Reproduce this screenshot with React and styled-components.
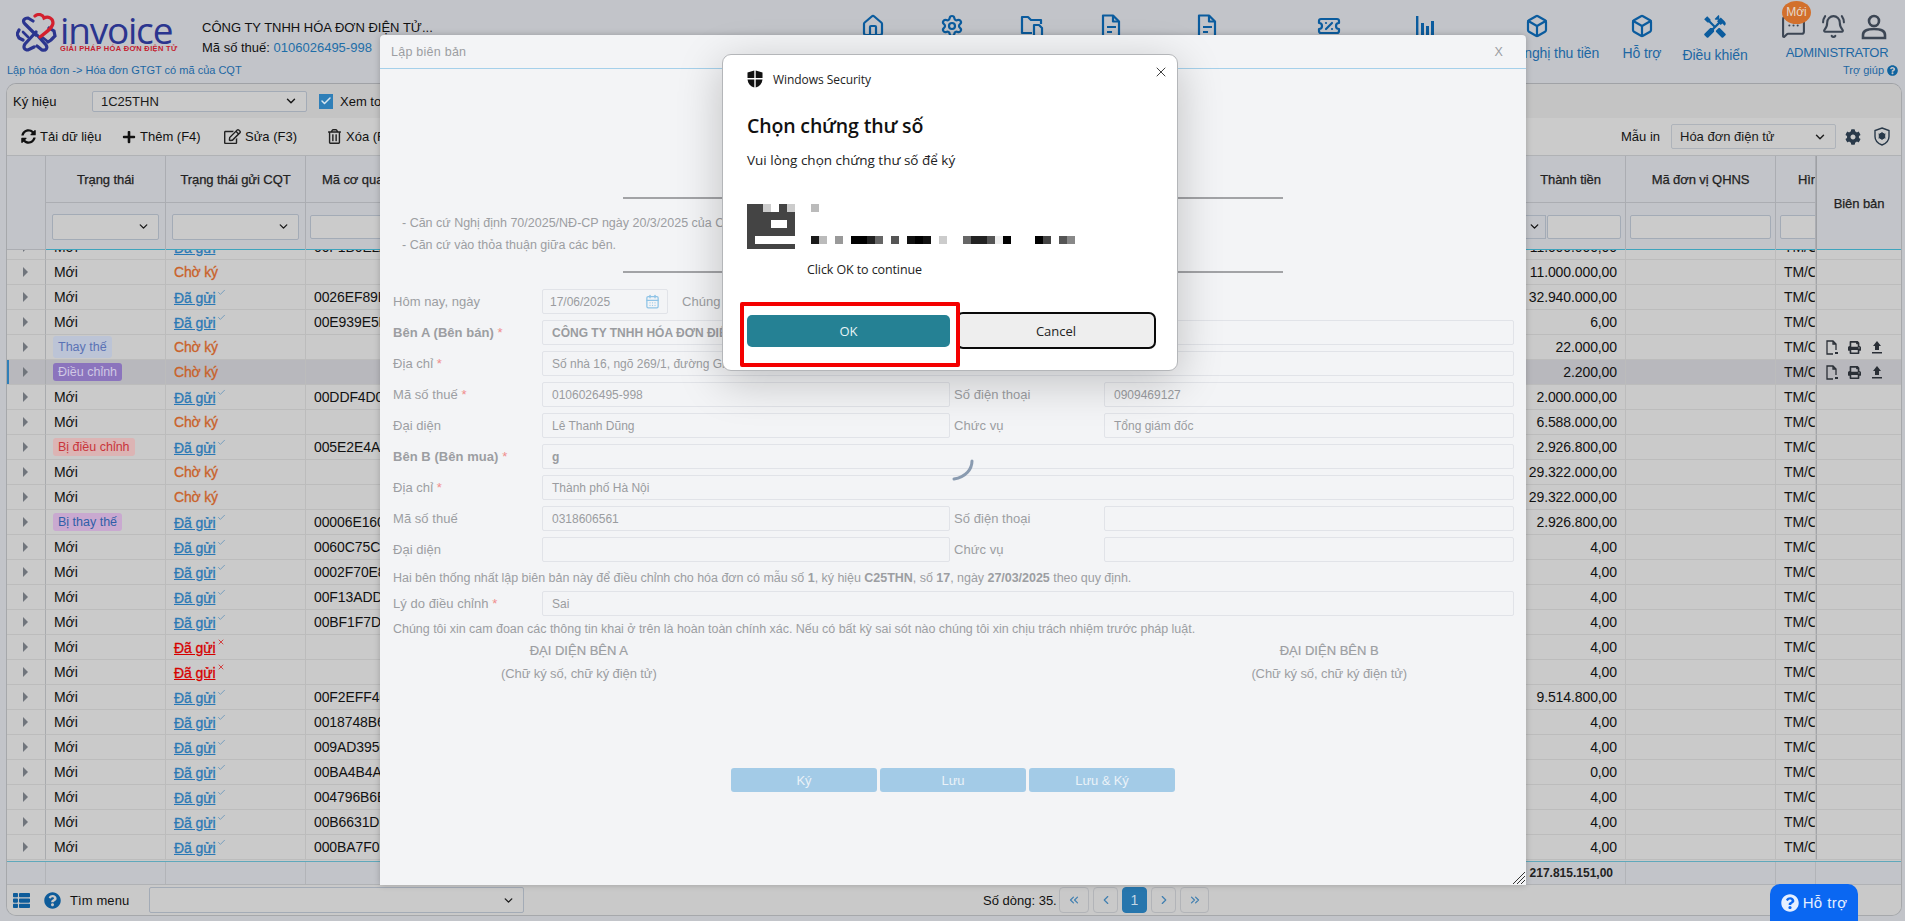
import React from "react";
import styled, { createGlobalStyle } from "styled-components";
import { House, Settings, TicketPercent, Box, MessageSquareMore, BellRing, ChevronDown, ChevronsLeft, ChevronsRight, ChevronLeft, ChevronRight, X as XIcon, Check, CalendarDays } from "lucide-react";
import { FaSyncAlt, FaPlus, FaRegEdit, FaRegTrashAlt, FaCog, FaQuestionCircle, FaThList, FaPrint } from "react-icons/fa";
import { MdHandyman } from "react-icons/md";

const Global = createGlobalStyle`
  html, body { margin: 0; width: 1905px; height: 921px; overflow: hidden; background: #c2c4c9; }
  body { font-family: "Liberation Sans", Arial, sans-serif; font-size: 13px; color: #111; }
  * { box-sizing: border-box; }
`;

const Page = styled.div`position: relative; width: 1905px; height: 921px; overflow: hidden;`;

/* header */
const TopBar = styled.header`display: flex; height: 62px; align-items: flex-start;`;
const Logo = styled.div`display: flex; align-items: flex-start; width: 202px; padding: 13px 0 0 16px;`;
const LogoText = styled.div`display: flex; flex-direction: column; margin: 2px 0 0 3px;`;
const LogoWord = styled.span`font: 400 37px/29px "Open Sans", sans-serif; letter-spacing: -1.2px; color: #2b358f; height: 29px;`;
const LogoTag = styled.span`font: 700 7.5px/10px "Liberation Sans", sans-serif; letter-spacing: .35px; color: #c5202e; white-space: nowrap;`;
const Company = styled.div`width: 631px; padding-top: 18px; line-height: 20px; font-size: 13px;`;
const CompanyName = styled.div`font-size: 13px;`;
const TaxCode = styled.span`color: #1e6ea8;`;
const Nav = styled.nav`display: flex; align-items: flex-start; padding-top: 14px;`;
const NavItem = styled.div`
  width: ${p => p.$w}px; display: flex; flex-direction: column; align-items: center; gap: 7px;
  color: #1d67a3; font-size: 14px; white-space: nowrap; letter-spacing: -.1px;
  svg { color: #0b5c9e; display: block; }
`;
const NavLabel = styled.span`margin-left: ${p => p.$shift || 0}px;`;
const UserArea = styled.div`position: relative; width: 144px; padding-top: 14px; display: flex; flex-direction: column; align-items: center;`;
const UserIcons = styled.div`display: flex; gap: 15px; height: 31px; color: #3c4654; padding-left: 2px;`;
const UserName = styled.div`color: #1d67a3; font-size: 13px; letter-spacing: -.3px; margin-left: 8px;`;
const NewBadge = styled.span`position: absolute; left: 21px; top: 1px; width: 29px; height: 23px; border-radius: 50%; background: #d2702c; color: #e6d9ca; font-size: 12px; line-height: 22px; text-align: center;`;
const Crumbs = styled.div`display: flex; justify-content: space-between; height: 21px; padding: 0 7px; font-size: 11px; line-height: 17px; color: #1d67a3;`;
const Help = styled.span`display: flex; align-items: center; gap: 3px; height: 17px;`;

/* panel */
const Panel = styled.main`
  margin-left: 6px; width: 1896px; height: 833px; background: #c9c9c9; border: 1px solid #a6a8ab; border-top: 1px solid #a0a2a6;
  border-radius: 10px; overflow: hidden; display: flex; flex-direction: column;
`;
const FilterBar = styled.div`display: flex; align-items: center; height: 34px; background: #c4c4c4; padding-left: 6px;`;
const BarLabel = styled.span`width: 79px; font-size: 13px;`;
const SelectBox = styled.div`
  display: flex; align-items: center; justify-content: space-between; flex: none;
  width: ${p => p.$w}px; height: ${p => p.$h || 25}px; padding: 0 8px; font-size: 13px; color: #1a1a1a;
  border: 1px solid ${p => p.$soft ? "#aeb3ba" : "#a3abb6"}; border-radius: 2px; background: #cacaca;
`;
const CheckBox = styled.span`display: flex; align-items: center; justify-content: center; width: 14px; height: 15px; margin: 0 7px 0 12px; background: #2f7fb8; color: #d8e6f0;`;
const ToolRow = styled.div`display: flex; align-items: center; height: 38px; padding: 0 11px 0 14px; background: #cbcbcb; border-bottom: 1px solid #b0b2b5; font-size: 13px;`;
const Tool = styled.span`display: flex; align-items: center; gap: 4px; white-space: nowrap; width: ${p => p.$w}px;`;
const ToolEnd = styled.div`display: flex; align-items: center; margin-left: auto; color: #2a3a4a;`;
const PrintLabel = styled.span`width: 50px; color: #111; font-size: 13px;`;
const IconSlot = styled.span`display: flex; margin-left: ${p => p.$m || 0}px;`;

const cols = "39px 120px 140px 1210px 110px 150px 40px 1fr";
const THead = styled.div`
  display: grid; grid-template-columns: ${cols}; grid-template-rows: 47px 47px; height: 94px;
  background: #c2c4c9; border-bottom: 1px solid #3ea4bd; flex: none;
`;
const HCell = styled.div`
  display: flex; align-items: center; justify-content: ${p => p.$inset ? "flex-start" : "center"}; font-size: 13px; color: #222; overflow: hidden; white-space: nowrap;
  border-right: 1px solid #abadb2; border-bottom: 1px solid #abadb2;
  padding: 0 4px 0 ${p => p.$inset || 4}px;
`;
const HeadText = styled.span`-webkit-text-stroke: .25px #222; letter-spacing: -.08px;`;
const SideHead = styled(HCell)`grid-row: 1 / span 2; grid-column: 8; border-bottom: 0; border-right: 0; border-left: 1px solid #9ea0a4;`;
const FirstHead = styled(HCell)`grid-row: 1 / span 2;`;
const FCell = styled.div`display: flex; align-items: center; justify-content: ${p => p.$align || "center"}; padding: 0 4px; border-right: 1px solid #abadb2; overflow: hidden;`;
const FilterInput = styled.div`width: ${p => p.$w ? `${p.$w}px` : "100%"}; flex: none; height: 24px; border: 1px solid #a3abb6; border-radius: 2px; background: #cbcbcb;`;
const MiniSelect = styled.div`display: flex; align-items: center; justify-content: flex-end; flex: none; width: 30px; height: 24px; margin-right: 1px; border: 1px solid #a3abb6; border-left: 0; padding-right: 4px;`;

const TBody = styled.div`height: 611px; overflow: hidden; flex: none;`;
const RowList = styled.div`margin-top: -15px;`;
const Row = styled.div`
  display: grid; grid-template-columns: ${cols}; height: 25px; align-items: stretch; position: relative;
  background: ${p => p.$sel ? "#b8b8bd" : "#cacaca"};
  ${p => p.$sel ? "box-shadow: inset 2px 0 0 #2f7fb8;" : ""}
`;
const Cell = styled.div`
  display: flex; align-items: center; justify-content: ${p => p.$right ? "flex-end" : "flex-start"};
  padding: ${p => p.$right ? "0 8px 0 0" : "0 0 0 8px"}; font-size: 14px; letter-spacing: -.1px; white-space: nowrap; overflow: hidden;
  border-right: 1px solid ${p => p.$strong ? "#a9abae" : "#bcbcbc"}; border-bottom: 1px solid #bcbcbc;
`;
const Expander = styled(Cell)`padding: 0; justify-content: center;`;
const Tri = styled.span`width: 0; height: 0; border-left: 5px solid #70757c; border-top: 5px solid transparent; border-bottom: 5px solid transparent; margin-left: -1px;`;
const Tag = styled.span`
  display: inline-block; padding: 0 5px; height: ${p => p.$h || 18}px; line-height: ${p => p.$h || 18}px; font-size: 12.5px; border-radius: 3px; letter-spacing: 0;
  color: ${p => p.$fg}; background: ${p => p.$bg}; margin-left: -1px;
`;
const Pending = styled.span`color: #c9622a; font-size: 14px; letter-spacing: -.2px; -webkit-text-stroke: .3px #c9622a;`;
const Sent = styled.span`display: inline-flex; align-items: flex-start; color: ${p => p.$bad ? "#d60000" : "#2a79b5"}; font-size: 14px; -webkit-text-stroke: .3px currentColor; margin-top: 1px;`;
const SentText = styled.span`text-decoration: underline; padding-right: 1px;`;
const Mark = styled.span`display: inline-flex; margin: -2px 0 0 1px; color: ${p => p.$bad ? "#d60000" : "#5a8fb8"}; -webkit-text-stroke: 0;`;
const Actions = styled.div`display: flex; align-items: center; gap: 10px; padding-left: 9px; color: #2a2f36;`;
const SideCell = styled(Cell)`padding: 0; border-right: 0; border-left: 1px solid #a3a5a8;`;

const TotalRow = styled.div`display: grid; grid-template-columns: ${cols}; height: 24px; background: #c2c4c9; border-top: 1px solid #5fa8bb; border-bottom: 1px solid #b0b2b5; flex: none;`;
const TotalCell = styled.div`display: flex; align-items: center; justify-content: flex-end; border-right: 1px solid #b2b4b8; font-size: 12px; font-weight: 700; color: #222; padding-right: 12px; white-space: nowrap;`;
const BottomBar = styled.div`display: flex; align-items: center; flex: 1; padding-left: 6px; background: #c9c9c9;`;
const BottomIcon = styled.span`display: flex; margin-right: ${p => p.$m}px;`;
const MenuLabel = styled.span`width: 79px; font-size: 13px; letter-spacing: .1px;`;
const RowsCount = styled.span`margin-left: 459px; width: 76px; font-size: 13px;`;
const Pager = styled.div`display: flex; gap: 4px; align-items: center;`;
const PageBtn = styled.span`
  display: flex; align-items: center; justify-content: center; width: ${p => p.$w}px; height: 26px; border-radius: 4px;
  border: 1px solid ${p => p.$on ? "#2776ad" : "#b2b4b8"}; background: ${p => p.$on ? "#2776ad" : "transparent"}; color: ${p => p.$on ? "#c4d7e4" : "#3f7fb0"}; font-size: 14px;
`;
const Support = styled.button`
  position: absolute; left: 1770px; top: 884px; width: 88px; height: 37px; border: 0; border-radius: 10px 10px 0 0; background: #0a67f2; color: #e6efff;
  font: 400 15px "Liberation Sans", sans-serif; display: flex; align-items: center; justify-content: center; gap: 4px; letter-spacing: .4px;
`;

/* invoice modal */
const Modal = styled.section`
  position: absolute; left: 380px; top: 35px; width: 1146px; height: 850px; background: #f3f4f6; border-radius: 4px 4px 0 0;
  box-shadow: 0 0 6px rgba(0,0,0,.22); color: #9c9ea2; display: flex; flex-direction: column;
`;
const ModalHead = styled.div`display: flex; justify-content: space-between; align-items: center; height: 34px; padding: 0 23px 0 11px; border-bottom: 1px solid #a5d0ea; font-size: 12.5px; letter-spacing: .25px; flex: none;`;
const ModalBody = styled.div`padding: 128px 12px 0 13px; display: flex; flex-direction: column; flex: 1;`;
const Rule = styled.div`height: 1px; border-top: 2px solid #a2a3a6; width: 660px; margin-left: 230px;`;
const Basis = styled.div`padding: 13px 0 15px 9px; line-height: 22px; font-size: 12.5px; height: 72px;`;
const Spacer = styled.div`height: 16px;`;
const FormRow = styled.div`display: flex; align-items: center; height: 25px; margin-bottom: ${p => p.$mb ?? 6}px;`;
const FieldLabel = styled.label`flex: none; width: ${p => p.$w || 149}px; font-size: 13px; font-weight: ${p => p.$bold ? 700 : 400}; padding-left: ${p => p.$pl ?? 0}px; letter-spacing: .05px;`;
const Star = styled.span`color: #f08d8d; font-weight: 400;`;
const Field = styled.div`
  display: flex; align-items: center; justify-content: ${p => p.$between ? "space-between" : "flex-start"}; flex: ${p => p.$w ? "none" : 1}; width: ${p => p.$w ? `${p.$w}px` : "auto"};
  height: 25px; padding: 0 ${p => p.$between ? 7 : 9}px; font-size: 12px; font-weight: ${p => p.$bold ? 700 : 400}; border: 1px solid #e1e3e8; border-radius: 2px; color: #9a9ca0;
`;
const PlainLine = styled.div`font-size: 12.5px; line-height: 20px; margin: ${p => p.$m}; letter-spacing: -.03px;`;
const Signs = styled.div`display: flex; justify-content: space-between; padding: 4px 107px 0 108px; font-size: 13px; text-align: center;`;
const SignCol = styled.div`display: flex; flex-direction: column; gap: 8px;`;
const SignTitle = styled.div`font-size: 13px; -webkit-text-stroke: .2px #9c9ea2;`;
const SignNote = styled.div`font-size: 13px; letter-spacing: -.1px;`;
const ModalButtons = styled.div`display: flex; gap: 3px; margin: 87px 0 0 338px;`;
const SoftBtn = styled.span`display: flex; align-items: center; justify-content: center; width: 146px; height: 24px; border-radius: 3px; background: #a3cbe7; color: #eaf2f8; font-size: 13px; letter-spacing: -.1px;`;
const Grip = styled.svg`position: absolute; right: 0; bottom: 0;`;
const Spinner = styled.svg`position: absolute; left: 570px; top: 424px;`;

/* windows dialog */
const Dialog = styled.section`
  position: absolute; left: 722px; top: 54px; width: 456px; height: 317px; background: #fff; border-radius: 9px; border: 1px solid #b4b6b9;
  box-shadow: 0 10px 45px rgba(0,0,0,.22); padding: 13px 20px 0 24px; color: #111; font-family: "Open Sans", "Noto Sans", sans-serif; display: flex; flex-direction: column;
`;
const DialogClose = styled.span`position: absolute; right: 8px; top: 9px; display: flex; color: #222;`;
const Brand = styled.div`display: flex; align-items: center; gap: 10px; height: 22px; font-size: 12px; color: #222; letter-spacing: -.05px;`;
const DialogTitle = styled.h2`margin: 22px 0 0; font: 600 19.5px/28px "Open Sans", sans-serif; color: #111; letter-spacing: -.15px;`;
const DialogText = styled.p`margin: 10px 0 0; font-size: 13.5px; line-height: 20px; color: #222;`;
const Cert = styled.svg`display: block; margin-top: 34px; flex: none;`;
const ClickText = styled.div`margin: 12px 0 0 60px; font-size: 12.5px; line-height: 18px; color: #222; letter-spacing: -.1px;`;
const DialogActions = styled.div`position: relative; display: flex; gap: 6px; margin-top: 33px; align-items: center;`;
const OkBtn = styled.button`width: 203px; height: 32px; flex: none; border: 0; border-radius: 5px; background: #258194; color: #e8f4f6; font: 400 13px "Open Sans", sans-serif;`;
const CancelBtn = styled.button`width: 200px; height: 37px; flex: none; border: 2px solid #0a0a0a; border-radius: 7px; background: #eeeeee; color: #222; font: 400 13px "Open Sans", sans-serif;`;
const RedBox = styled.div`position: absolute; left: 740px; top: 302px; width: 220px; height: 65px; border: 4px solid #f40000; border-radius: 2px; pointer-events: none;`;

const HomeIcon = () => <House size={24} strokeWidth={2.2} />;
const GearIcon = () => <Settings size={24} strokeWidth={2.2} />;
const FolderIcon = () => (
  <svg width="24" height="23" viewBox="0 0 24 23" fill="none" stroke="currentColor" strokeWidth="2.2" strokeLinejoin="round">
    <path d="M12 19H2V3h6l3 3h10v4" /><path d="M14 11h5l3 3v8h-8z" />
  </svg>
);
const DocIcon = () => (
  <svg width="22" height="24" viewBox="0 0 22 24" fill="none" stroke="currentColor" strokeWidth="2.2" strokeLinejoin="round">
    <path d="M3 1.5h10l6 6v15H3z" /><path d="M13 1.5v6h6M7 13h9M7 18h5" />
  </svg>
);
const ChartIcon = () => (
  <svg width="24" height="24" viewBox="0 0 24 24" fill="#0b5c9e"><path d="M2 2h2.400v19H23v2.200H2z" /><path d="M7 9h3v12H7zM12 12h3v9h-3zM17 7h3v14h-3z" /></svg>
);
const PersonIcon = () => (
  <svg width="26" height="26" viewBox="0 0 26 26" fill="none" stroke="#3c4654" strokeWidth="2.6"><circle cx="13" cy="7" r="5" /><path d="M2 24v-3c0-4 4-6 11-6s11 2 11 6v3z" /></svg>
);
const KnotLogo = () => (
  <svg width="41" height="40" viewBox="0 0 41 40" fill="none" strokeLinecap="round">
    <path d="M20 22 9 11c-3-3-1-6 3-6l5 3M21 22l9 10c2 3 0 6-4 5l-5-4M20 19 9 31c-2 3-1 6 3 6l6-3M3 17l-2 4 2 4 4 2M33 15l5 3 1 5-4 4-3 2" stroke="#2b358f" strokeWidth="3.2" />
    <path d="M7 19l5 5M26 24l5 4" stroke="#2b358f" strokeWidth="2.6" />
    <path d="M19 3c4-3 8-1 9 2 4-2 9 0 9 5 0 4-5 8-13 14" stroke="#d3202e" strokeWidth="3.2" />
  </svg>
);
const ShieldIcon = () => (
  <svg width="16" height="19" viewBox="0 0 16 19" fill="none" stroke="#2a3a4a" strokeWidth="1.4">
    <path d="M8 1l7 2.500v6c0 4-3 7-7 8.500-4-1.500-7-4.500-7-8.500v-6z" /><circle cx="8" cy="9" r="2.600" fill="#2a3a4a" />
    <path d="M8 5v8M4.500 7l7 4M11.500 7l-7 4" strokeWidth="1" />
  </svg>
);
const WinShield = () => (
  <svg width="16" height="18" viewBox="0 0 16 18" fill="#111"><path d="M7.300.5.500 2.500V8h6.800zM8.700.5l6.800 2V8H8.700zM.5 9.400h6.800v8.100C3.500 16.300 1 13.700.5 9.400zM8.700 9.400h6.800c-.5 4.300-3 6.900-6.800 8.100z" /></svg>
);
const FileMini = () => (
  <svg width="12" height="15" viewBox="0 0 12 15" fill="none" stroke="#2a2f36" strokeWidth="1.300"><path d="M7 14H1V1h6l3 3v6M7 1v3h3" /><path d="M9 12h3v2H9z" fill="#2a2f36" stroke="none" /></svg>
);
const UploadMini = () => (
  <svg width="12" height="14" viewBox="0 0 12 14" fill="#2a2f36"><path d="M6 1 10 6H8v4H4V6H2zM1 12h10v1.500H1z" /></svg>
);

const pixelRow = ["#1a1a1a","#bbb",null,"#999",null,"#000","#000","#222","#666",null,"#555",null,"#111","#000","#111",null,"#ccc",null,null,"#666","#222","#222","#555","#eee","#000",null,null,null,"#000","#444",null,"#555","#888"];
const CertArt = () => (
  <Cert width="330" height="45" viewBox="0 0 330 45" shapeRendering="crispEdges">
    <rect x="0" y="0" width="48" height="45" fill="#444" />
    <rect x="16" y="0" width="8" height="8" fill="#ccc" /><rect x="24" y="0" width="8" height="8" fill="#fff" />
    <rect x="40" y="0" width="8" height="8" fill="#ccc" />
    <rect x="24" y="16" width="16" height="8" fill="#fff" /><rect x="8" y="32" width="40" height="8" fill="#fff" />
    <rect x="64" y="0" width="8" height="8" fill="#bbb" />
    {pixelRow.map((c, i) => c ? <rect key={i} x={64 + i * 8} y="32" width="8" height="8" fill={c} /> : null)}
  </Cert>
);

const rows = [
  ["Mới", "sent", "00F1B0E2A", "11.000.000,00"],
  ["Mới", "wait", "", "11.000.000,00"],
  ["Mới", "sent", "0026EF89B0", "32.940.000,00"],
  ["Mới", "sent", "00E939E5B0", "6,00"],
  ["replace", "wait", "", "22.000,00", true],
  ["adjust", "wait", "", "2.200,00", true, true],
  ["Mới", "sent", "00DDF4D0B0", "2.000.000,00"],
  ["Mới", "wait", "", "6.588.000,00"],
  ["adjusted", "sent", "005E2E4A60", "2.926.800,00"],
  ["Mới", "wait", "", "29.322.000,00"],
  ["Mới", "wait", "", "29.322.000,00"],
  ["replaced", "sent", "00006E1601", "2.926.800,00"],
  ["Mới", "sent", "0060C75C80", "4,00"],
  ["Mới", "sent", "0002F70E80", "4,00"],
  ["Mới", "sent", "00F13ADDA0", "4,00"],
  ["Mới", "sent", "00BF1F7D40", "4,00"],
  ["Mới", "bad", "", "4,00"],
  ["Mới", "bad", "", "4,00"],
  ["Mới", "sent", "00F2EFF4C0", "9.514.800,00"],
  ["Mới", "sent", "0018748B60", "4,00"],
  ["Mới", "sent", "009AD395C0", "4,00"],
  ["Mới", "sent", "00BA4B4A70", "0,00"],
  ["Mới", "sent", "004796B6E0", "4,00"],
  ["Mới", "sent", "00B6631DE0", "4,00"],
  ["Mới", "sent", "000BA7F0F0", "4,00"],
];

const tagMap = {
  replace: <Tag $h={22} $fg="#5a72b5" $bg="#bcc4d6">Thay thế</Tag>,
  adjust: <Tag $fg="#cfc8e4" $bg="#8b74bd">Điều chỉnh</Tag>,
  adjusted: <Tag $fg="#c9353b" $bg="#dcb4b4">Bị điều chỉnh</Tag>,
  replaced: <Tag $fg="#2f5fa8" $bg="#c9a9d0">Bị thay thế</Tag>,
};

const SendState = ({ v }) => {
  if (v === "wait") return <Pending>Chờ ký</Pending>;
  const bad = v === "bad";
  return (
    <Sent $bad={bad}>
      <SentText>Đã gửi</SentText>
      <Mark $bad={bad}>{bad ? <XIcon size={8} strokeWidth={2} /> : <Check size={9} strokeWidth={2} />}</Mark>
    </Sent>
  );
};

const navItems = [
  [80, <HomeIcon />, "Trang chủ"], [78, <GearIcon />, "Hệ thống"], [82, <FolderIcon />, "Danh mục"], [76, <DocIcon />, "Lập hóa đơn"],
  [116, <DocIcon />, "Hóa đơn đầu vào"], [128, <TicketPercent size={24} strokeWidth={2.2} />, "Khuyến mại"], [66, <ChartIcon />, "Báo cáo"],
  [156, <Box size={24} strokeWidth={2.2} />, "Đề nghị thu tiền", 28], [54, <Box size={24} strokeWidth={2.2} />, "Hỗ trợ"], [92, <MdHandyman size={26} />, "Điều khiển"],
];

const FormLine = ({ label, req, bold, value, vbold, mb }) => (
  <FormRow $mb={mb}>
    <FieldLabel $bold={bold}>{label}{req ? <Star> *</Star> : null}</FieldLabel>
    <Field $bold={vbold}>{value}</Field>
  </FormRow>
);
const SplitLine = ({ label, req, value, label2, value2, mb }) => (
  <FormRow $mb={mb}>
    <FieldLabel>{label}{req ? <Star> *</Star> : null}</FieldLabel>
    <Field $w={408}>{value}</Field>
    <FieldLabel $w={154} $pl={4}>{label2}</FieldLabel>
    <Field>{value2}</Field>
  </FormRow>
);

const Chevron = () => <ChevronDown size={13} strokeWidth={2.5} />;

export default function App() {
  return (
    <Page>
      <Global />
      <TopBar>
        <Logo>
          <KnotLogo />
          <LogoText>
            <LogoWord>invoice</LogoWord>
            <LogoTag>GIẢI PHÁP HÓA ĐƠN ĐIỆN TỬ</LogoTag>
          </LogoText>
        </Logo>
        <Company>
          <CompanyName>CÔNG TY TNHH HÓA ĐƠN ĐIỆN TỬ...</CompanyName>
          <div>Mã số thuế: <TaxCode>0106026495-998</TaxCode></div>
        </Company>
        <Nav>
          {navItems.map(([w, icon, label, shift]) => (
            <NavItem key={label + w} $w={w}>{icon}<NavLabel $shift={shift}>{label}</NavLabel></NavItem>
          ))}
        </Nav>
        <UserArea>
          <UserIcons>
            <MessageSquareMore size={25} strokeWidth={2} />
            <BellRing size={25} strokeWidth={2} />
            <PersonIcon />
          </UserIcons>
          <NewBadge>Mới</NewBadge>
          <UserName>ADMINISTRATOR</UserName>
        </UserArea>
      </TopBar>
      <Crumbs>
        <span>Lập hóa đơn -&gt; Hóa đơn GTGT có mã của CQT</span>
        <Help>Trợ giúp <FaQuestionCircle size={11} color="#0f639f" /></Help>
      </Crumbs>

      <Panel>
        <FilterBar>
          <BarLabel>Ký hiệu</BarLabel>
          <SelectBox $w={215} $h={21}>1C25THN<ChevronDown size={14} strokeWidth={2.5} /></SelectBox>
          <CheckBox><Check size={12} strokeWidth={3} /></CheckBox>
          <span>Xem toàn bộ</span>
        </FilterBar>
        <ToolRow>
          <Tool $w={101}><FaSyncAlt size={15} color="#111" />Tải dữ liệu</Tool>
          <Tool $w={102}><FaPlus size={14} color="#111" />Thêm (F4)</Tool>
          <Tool $w={103}><FaRegEdit size={17} color="#222" />Sửa (F3)</Tool>
          <Tool $w={90}><FaRegTrashAlt size={15} color="#222" />Xóa (F5)</Tool>
          <ToolEnd>
            <PrintLabel>Mẫu in</PrintLabel>
            <SelectBox $w={165} $soft>Hóa đơn điện tử<ChevronDown size={14} strokeWidth={2.5} color="#222" /></SelectBox>
            <IconSlot $m={9}><FaCog size={16} /></IconSlot>
            <IconSlot $m={13}><ShieldIcon /></IconSlot>
          </ToolEnd>
        </ToolRow>
        <THead>
          <FirstHead />
          <HCell><HeadText>Trạng thái</HeadText></HCell>
          <HCell><HeadText>Trạng thái gửi CQT</HeadText></HCell>
          <HCell $inset={16}><HeadText>Mã cơ quan thuế</HeadText></HCell>
          <HCell><HeadText>Thành tiền</HeadText></HCell>
          <HCell><HeadText>Mã đơn vị QHNS</HeadText></HCell>
          <HCell $inset={22}><HeadText>Hình thức</HeadText></HCell>
          <SideHead><HeadText>Biên bản</HeadText></SideHead>
          <FCell><SelectBox $w={107} $h={26}><span /><Chevron /></SelectBox></FCell>
          <FCell><SelectBox $w={127} $h={26}><span /><Chevron /></SelectBox></FCell>
          <FCell $align="flex-start"><FilterInput $w={300} /></FCell>
          <FCell $align="flex-end"><MiniSelect><Chevron /></MiniSelect><FilterInput $w={74} /></FCell>
          <FCell><FilterInput /></FCell>
          <FCell $align="flex-start"><FilterInput $w={60} /></FCell>
        </THead>
        <TBody>
          <RowList>
            {rows.map((r, i) => (
              <Row key={i} $sel={r[5]}>
                <Expander $strong><Tri /></Expander>
                <Cell>{tagMap[r[0]] || r[0]}</Cell>
                <Cell><SendState v={r[1]} /></Cell>
                <Cell>{r[2]}</Cell>
                <Cell $right>{r[3]}</Cell>
                <Cell />
                <Cell>TM/CK</Cell>
                <SideCell>
                  {r[4] ? <Actions><FileMini /><FaPrint size={13} /><UploadMini /></Actions> : null}
                </SideCell>
              </Row>
            ))}
          </RowList>
        </TBody>
        <TotalRow>
          <TotalCell /><TotalCell /><TotalCell /><TotalCell />
          <TotalCell>217.815.151,00</TotalCell>
          <TotalCell /><TotalCell /><span />
        </TotalRow>
        <BottomBar>
          <BottomIcon $m={14}><FaThList size={17} color="#0e5c9a" /></BottomIcon>
          <BottomIcon $m={9}><FaQuestionCircle size={17} color="#0e5c9a" /></BottomIcon>
          <MenuLabel>Tìm menu</MenuLabel>
          <SelectBox $w={375} $h={26}><span /><Chevron /></SelectBox>
          <RowsCount>Số dòng: 35.</RowsCount>
          <Pager>
            <PageBtn $w={30}><ChevronsLeft size={14} /></PageBtn>
            <PageBtn $w={25}><ChevronLeft size={14} /></PageBtn>
            <PageBtn $w={25} $on>1</PageBtn>
            <PageBtn $w={25}><ChevronRight size={14} /></PageBtn>
            <PageBtn $w={29}><ChevronsRight size={14} /></PageBtn>
          </Pager>
        </BottomBar>
      </Panel>

      <Support><FaQuestionCircle size={18} />Hỗ trợ</Support>

      <Modal>
        <ModalHead><span>Lập biên bản</span><span>X</span></ModalHead>
        <ModalBody>
          <Rule />
          <Basis>
            <div>- Căn cứ Nghị định 70/2025/NĐ-CP ngày 20/3/2025 của Chính phủ;</div>
            <div>- Căn cứ vào thỏa thuận giữa các bên.</div>
          </Basis>
          <Rule />
          <Spacer />
          <FormRow>
            <FieldLabel>Hôm nay, ngày</FieldLabel>
            <Field $w={126} $between>17/06/2025<CalendarDays size={15} color="#8fc3e6" /></Field>
            <FieldLabel $pl={14} $w={200}>Chúng tôi gồm có:</FieldLabel>
          </FormRow>
          <FormLine label="Bên A (Bên bán)" req bold vbold value="CÔNG TY TNHH HÓA ĐƠN ĐIỆN TỬ" />
          <FormLine label="Địa chỉ" req value="Số nhà 16, ngõ 269/1, đường Giáp Bát" />
          <SplitLine label="Mã số thuế" req value="0106026495-998" label2="Số điện thoại" value2="0909469127" />
          <SplitLine label="Đại diện" value="Lê Thanh Dũng" label2="Chức vụ" value2="Tổng giám đốc" />
          <FormLine label="Bên B (Bên mua)" req bold vbold value="g" />
          <FormLine label="Địa chỉ" req value="Thành phố Hà Nội" />
          <SplitLine label="Mã số thuế" value="0318606561" label2="Số điện thoại" value2="" />
          <SplitLine label="Đại diện" value="" label2="Chức vụ" value2="" mb={6} />
          <PlainLine $m="0 0 3px 0">Hai bên thống nhất lập biên bản này để điều chỉnh cho hóa đơn có mẫu số <b>1</b>, ký hiệu <b>C25THN</b>, số <b>17</b>, ngày <b>27/03/2025</b> theo quy định.</PlainLine>
          <FormLine label="Lý do điều chỉnh" req value="Sai" mb={3} />
          <PlainLine $m="0">Chúng tôi xin cam đoan các thông tin khai ở trên là hoàn toàn chính xác. Nếu có bất kỳ sai sót nào chúng tôi xin chịu trách nhiệm trước pháp luật.</PlainLine>
          <Signs>
            <SignCol><SignTitle>ĐẠI DIỆN BÊN A</SignTitle><SignNote>(Chữ ký số, chữ ký điện tử)</SignNote></SignCol>
            <SignCol><SignTitle>ĐẠI DIỆN BÊN B</SignTitle><SignNote>(Chữ ký số, chữ ký điện tử)</SignNote></SignCol>
          </Signs>
          <ModalButtons><SoftBtn>Ký</SoftBtn><SoftBtn>Lưu</SoftBtn><SoftBtn>Lưu &amp; Ký</SoftBtn></ModalButtons>
        </ModalBody>
        <Spinner width="26" height="24" viewBox="0 0 26 24" fill="none"><path d="M22 2C22 10 16 18 4 20" stroke="#8a9bb0" strokeWidth="3" strokeLinecap="round" /></Spinner>
        <Grip width="14" height="14" viewBox="0 0 14 14" stroke="#333" fill="none"><path d="M1 13 13 1M5 13l8-8M9 13l4-4" /></Grip>
      </Modal>

      <Dialog>
        <DialogClose><XIcon size={16} strokeWidth={1.3} /></DialogClose>
        <Brand><WinShield />Windows Security</Brand>
        <DialogTitle>Chọn chứng thư số</DialogTitle>
        <DialogText>Vui lòng chọn chứng thư số để ký</DialogText>
        <CertArt />
        <ClickText>Click OK to continue</ClickText>
        <DialogActions>
          <OkBtn>OK</OkBtn>
          <CancelBtn>Cancel</CancelBtn>
        </DialogActions>
      </Dialog>
      <RedBox />
    </Page>
  );
}
